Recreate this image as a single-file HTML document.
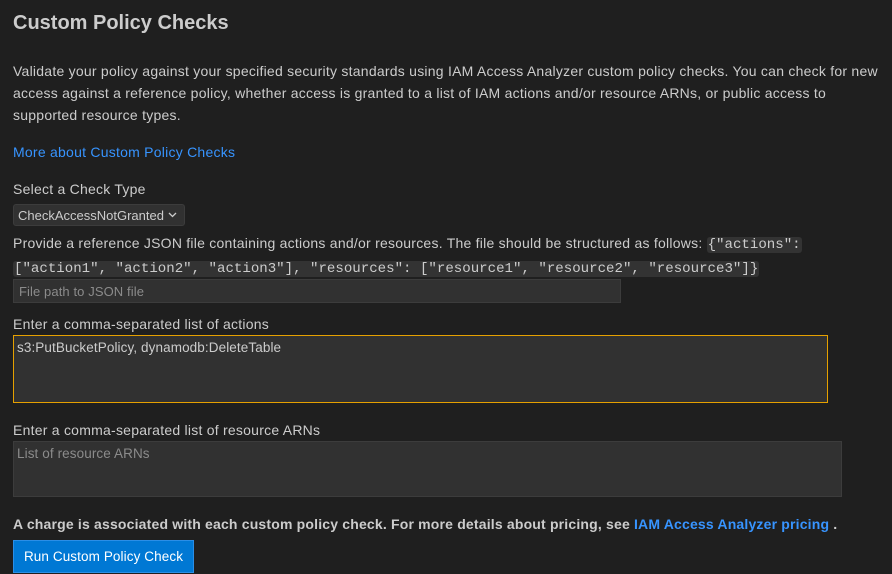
<!DOCTYPE html>
<html><head><style>
body{margin:0;width:892px;height:574px;background:#1f1f1f;color:#cccccc;font-family:"Liberation Sans",sans-serif;font-size:14px;letter-spacing:0.24px;overflow:hidden;position:relative}
.a{position:absolute;left:13px;white-space:nowrap}
.box{position:absolute;left:13px;background:#313131;border:1px solid #3c3c3c;box-sizing:border-box;white-space:nowrap;letter-spacing:0.1px}
code{font-family:"Liberation Mono",monospace;background:#333;border-radius:3px;padding:0 1px;font-size:14.1px;letter-spacing:0}
</style></head><body>
<div class="a" style="top:12px;font-size:20px;font-weight:bold;color:#cccccc;letter-spacing:0">Custom Policy Checks</div>
<div class="a" style="top:60px;line-height:22px">Validate your policy against your specified security standards using IAM Access Analyzer custom policy checks. You can check for new<br>access against a reference policy, whether access is granted to a list of IAM actions and/or resource ARNs, or public access to<br>supported resource types.</div>
<div class="a" style="top:144px;color:#3794ff">More about Custom Policy Checks</div>
<div class="a" style="top:181px">Select a Check Type</div>
<div class="box" style="top:204px;width:172px;height:22px;border-radius:3px;font-size:13px;padding:3px 4px;color:#ccc;letter-spacing:0">CheckAccessNotGranted <svg width="9" height="6" viewBox="0 0 9 6" style="vertical-align:2px"><path d="M1 1l3.5 3.5L8 1" stroke="#ccc" stroke-width="1.3" fill="none"/></svg></div>
<div class="a" style="top:232px;line-height:22px">Provide a reference JSON file containing actions and/or resources. The file should be structured as follows: <code>{"actions":</code><br><code>["action1", "action2", "action3"], "resources": ["resource1", "resource2", "resource3"]}</code></div>
<div class="box" style="top:279px;width:608px;height:24px;padding:4px 5px;color:#8b8b8b;font-size:13px">File path to JSON file</div>
<div class="a" style="top:316px">Enter a comma-separated list of actions</div>
<div class="box" style="top:335px;width:815px;height:68px;border-color:#e5a000;padding:4px 3px;font-size:13.5px">s3:PutBucketPolicy, dynamodb:DeleteTable</div>
<div class="a" style="top:422px">Enter a comma-separated list of resource ARNs</div>
<div class="box" style="top:441px;width:829px;height:56px;padding:4px 3px;color:#8b8b8b;font-size:13.5px">List of resource ARNs</div>
<div class="a" style="top:516px;font-weight:bold;letter-spacing:0.18px">A charge is associated with each custom policy check. For more details about pricing, see <span style="color:#3794ff">IAM Access Analyzer pricing</span> .</div>
<div style="position:absolute;left:13px;top:540px;width:181px;height:33px;background:#0078d4;border:1px solid #2b8ee6;box-sizing:border-box;color:#fff;font-size:13.5px;line-height:31px;text-align:center;letter-spacing:0.1px">Run Custom Policy Check</div>
</body></html>
